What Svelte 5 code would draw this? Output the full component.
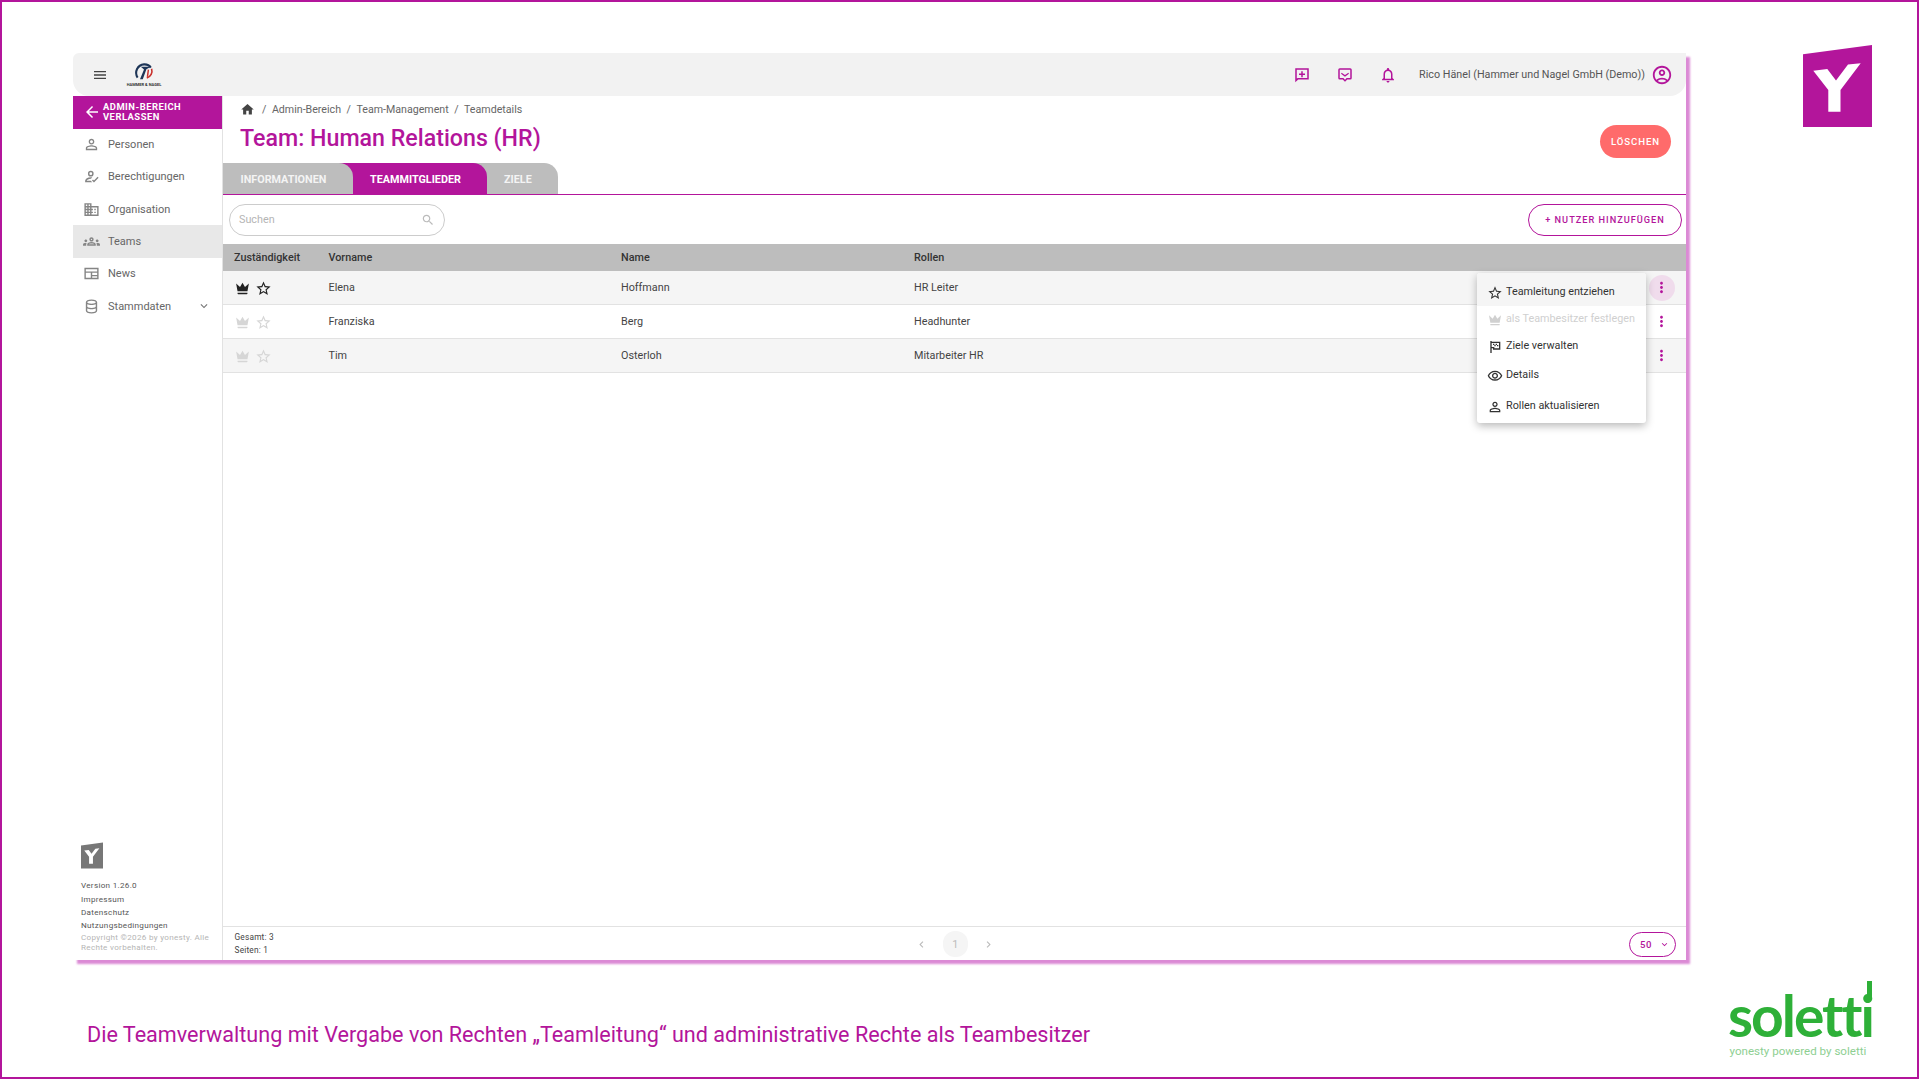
<script>
  const P = {
    menu: 'M3 18h18v-2H3v2zm0-5h18v-2H3v2zm0-7v2h18V6H3z',
    home: 'M10 20v-6h4v6h5v-8h3L12 3 2 12h3v8z',
    back: 'M20 11H7.83l5.59-5.59L12 4l-8 8 8 8 1.41-1.41L7.83 13H20v-2z',
    person: 'M12 5.9c1.16 0 2.1.94 2.1 2.1s-.94 2.1-2.1 2.1S9.9 9.16 9.9 8s.94-2.1 2.1-2.1m0 9c2.97 0 6.1 1.46 6.1 2.1v1.1H5.9V17c0-.64 3.13-2.1 6.1-2.1M12 4C9.79 4 8 5.79 8 8s1.79 4 4 4 4-1.79 4-4-1.79-4-4-4zm0 9c-2.67 0-8 1.34-8 4v3h16v-3c0-2.66-5.33-4-8-4z',
    reg: 'M11 4a4 4 0 1 0 0 8 4 4 0 0 0 0-8zm0 2a2 2 0 1 1 0 4 2 2 0 0 1 0-4zM3 18c.2-2.6 3.4-5 8-5 .7 0 1.4.1 2 .2l-1.7 1.8H11c-3.1 0-5.4 1.4-5.8 3H11l2 2H3v-2zm12.5 2.5L12.7 17.7l1.4-1.4 1.4 1.4 5.1-5.2 1.4 1.4z',
    domain: 'M12 7V3H2v18h20V7H12zM6 19H4v-2h2v2zm0-4H4v-2h2v2zm0-4H4V9h2v2zm0-4H4V5h2v2zm4 12H8v-2h2v2zm0-4H8v-2h2v2zm0-4H8V9h2v2zm0-4H8V5h2v2zm10 12h-8v-2h2v-2h-2v-2h2v-2h-2V9h8v10zm-2-8h-2v2h2v-2zm0 4h-2v2h2v-2z',
    groups: 'M4 13c1.1 0 2-.9 2-2s-.9-2-2-2-2 .9-2 2 .9 2 2 2zm1.13 1.1c-.37-.06-.74-.1-1.13-.1-.99 0-1.93.21-2.78.58C.48 14.9 0 15.62 0 16.43V18h4.5v-1.61c0-.83.23-1.61.63-2.29zM20 13c1.1 0 2-.9 2-2s-.9-2-2-2-2 .9-2 2 .9 2 2 2zm4 3.43c0-.81-.48-1.53-1.22-1.85-.85-.37-1.79-.58-2.78-.58-.39 0-.76.04-1.13.1.4.68.63 1.46.63 2.29V18H24v-1.57zm-7.76-2.78c-1.17-.52-2.61-.9-4.24-.9-1.63 0-3.07.39-4.24.9C6.68 14.13 6 15.21 6 16.39V18h12v-1.61c0-1.18-.68-2.26-1.76-2.74zM8.07 16c.09-.23.13-.39.91-.69.97-.38 1.99-.56 3.02-.56s2.05.18 3.02.56c.77.3.81.46.91.69H8.07zM12 8c.55 0 1 .45 1 1s-.45 1-1 1-1-.45-1-1 .45-1 1-1m0-2c-1.66 0-3 1.34-3 3s1.34 3 3 3 3-1.34 3-3-1.34-3-3-3z',
    news: 'M2 4h20v16H2V4zm2 2v3h16V6H4zm0 5v7h7v-7H4zm9 0v3h7v-3h-7zm0 5v2h7v-2h-7z',
    storage: 'M12 2C7 2 4 3.800 4 6v12c0 2.200 3 4 8 4s8-1.800 8-4V6c0-2.200-3-4-8-4zm0 2c3.900 0 6 1.300 6 2s-2.100 2-6 2-6-1.300-6-2 2.100-2 6-2zM6 8.900C7.400 9.600 9.500 10 12 10s4.600-.4 6-1.100V12c0 .7-2.100 2-6 2s-6-1.300-6-2V8.900zm0 6C7.400 15.600 9.500 16 12 16s4.600-.4 6-1.100V18c0 .7-2.100 2-6 2s-6-1.300-6-2v-3.100z',
    down: 'M7.41 8.59L12 13.17l4.59-4.58L18 10l-6 6-6-6z',
    left: 'M15.41 7.41L14 6l-6 6 6 6 1.41-1.41L10.830 12z',
    right: 'M8.59 16.59L10 18l6-6-6-6-1.41 1.410L13.170 12z',
    star: 'M22 9.24l-7.19-.62L12 2 9.19 8.630 2 9.240l5.460 4.730L5.820 21 12 17.270 18.180 21l-1.630-7.030L22 9.240zM12 15.400l-3.760 2.270 1-4.280-3.320-2.880 4.380-.38L12 6.100l1.710 4.040 4.380.38-3.320 2.880 1 4.280L12 15.400z',
    crown: 'M5 16L3 5l5.500 5L12 4l3.500 6L21 5l-2 11H5zm14 3c0 .6-.4 1-1 1H6c-.6 0-1-.4-1-1v-1h14v1z',
    kebab: 'M12 8c1.100 0 2-.9 2-2s-.9-2-2-2-2 .9-2 2 .9 2 2 2zm0 2c-1.100 0-2 .9-2 2s.9 2 2 2 2-.9 2-2-.9-2-2-2zm0 6c-1.100 0-2 .9-2 2s.9 2 2 2 2-.9 2-2-.9-2-2-2z',
    eye: 'M12 6c3.790 0 7.170 2.130 8.820 5.500C19.170 14.870 15.790 17 12 17s-7.170-2.130-8.820-5.500C4.830 8.130 8.210 6 12 6m0-2C7 4 2.730 7.110 1 11.500 2.730 15.890 7 19 12 19s9.270-3.110 11-7.500C21.270 7.110 17 4 12 4zm0 5c1.380 0 2.500 1.120 2.500 2.500S13.380 14 12 14s-2.500-1.120-2.500-2.500S10.620 9 12 9m0-2c-2.480 0-4.500 2.020-4.500 4.500S9.520 16 12 16s4.500-2.020 4.500-4.500S14.480 7 12 7z',
    flag: 'M5 3h2v1h13v12H9v-2H7v7H5V3zm2 3v6h4v2h7V6H7zm2 1h2v2H9V7zm2 2h2v2h-2V9zm2-2h2v2h-2V7zm2 2h2v2h-2V9z',
    bell: 'M12 22c1.100 0 2-.9 2-2h-4c0 1.100.9 2 2 2zm6-6v-5c0-3.070-1.630-5.640-4.500-6.320V4c0-.83-.67-1.500-1.500-1.500s-1.500.67-1.500 1.500v.68C7.640 5.360 6 7.920 6 11v5l-2 2v1h16v-1l-2-2zm-2 1H8v-6c0-2.480 1.510-4.500 4-4.500s4 2.020 4 4.500v6z',
    account: 'M12 2C6.480 2 2 6.480 2 12s4.480 10 10 10 10-4.480 10-10S17.520 2 12 2zM7.350 18.500C8.660 17.560 10.260 17 12 17s3.340.56 4.650 1.500c-1.310.94-2.910 1.500-4.650 1.500s-3.340-.56-4.650-1.500zm10.790-1.380C16.450 15.800 14.320 15 12 15s-4.450.8-6.140 2.120C4.700 15.730 4 13.950 4 12c0-4.420 3.580-8 8-8s8 3.580 8 8c0 1.950-.7 3.730-1.860 5.120zM12 6c-1.930 0-3.500 1.570-3.500 3.500S10.070 13 12 13s3.500-1.570 3.500-3.500S13.930 6 12 6zm0 5c-.83 0-1.500-.67-1.500-1.500S11.170 8 12 8s1.500.67 1.500 1.500S12.830 11 12 11z',
    search: 'M15.500 14h-.79l-.28-.27C15.410 12.590 16 11.110 16 9.500 16 5.910 13.090 3 9.500 3S3 5.910 3 9.500 5.910 16 9.500 16c1.610 0 3.090-.59 4.230-1.570l.27.28v.79l5 4.990L20.490 19l-4.990-5zm-6 0C7.010 14 5 11.990 5 9.500S7.010 5 9.500 5 14 7.010 14 9.500 11.990 14 9.500 14z',
    msgplus: 'M3 3h18v15H7l-4 3.500V3zm2 2v11.500L6.300 16H19V5H5zm6 2h2v3h3v2h-3v3h-2v-3H8v-2h3V7z',
    msgdown: 'M5 3h14a2 2 0 0 1 2 2v11a2 2 0 0 1-2 2h-4l-3 3-3-3H5a2 2 0 0 1-2-2V5a2 2 0 0 1 2-2zm0 2v11h4.800L12 18.200l2.200-2.200H19V5H5zm2.500 4L12 12l4.500-3 .8 1.400L12 14.200l-5.300-3.800z'
  };

  const nav = [
    { label: 'Personen', icon: 'person' },
    { label: 'Berechtigungen', icon: 'reg' },
    { label: 'Organisation', icon: 'domain' },
    { label: 'Teams', icon: 'groups', active: true },
    { label: 'News', icon: 'news' },
    { label: 'Stammdaten', icon: 'storage', more: true }
  ];
  const rows = [
    { first: 'Elena', last: 'Hoffmann', role: 'HR Leiter', lead: true, open: true },
    { first: 'Franziska', last: 'Berg', role: 'Headhunter' },
    { first: 'Tim', last: 'Osterloh', role: 'Mitarbeiter HR' }
  ];
  const items = [
    { label: 'Teamleitung entziehen', icon: 'star', cls: 'first' },
    { label: 'als Teambesitzer festlegen', icon: 'crown', cls: 'second off' },
    { label: 'Ziele verwalten', icon: 'flag', cls: 'compact' },
    { label: 'Details', icon: 'eye', cls: '' },
    { label: 'Rollen aktualisieren', icon: 'person', cls: 'last' }
  ];
</script>

{#snippet ic(name, cls)}
  <svg class="ic {cls}" viewBox="0 0 24 24" aria-hidden="true"><path d={P[name]} fill="currentColor" fill-rule="evenodd" /></svg>
{/snippet}

{#snippet ylogo(cls)}
  <svg class={cls} viewBox="0 0 69 82" aria-hidden="true">
    <polygon points="0,9.300 69,0 69,82 0,82" fill="currentColor" />
    <polygon points="10.300,25.700 24.300,24 33,35.500 45,19.500 57.700,18.300 37.500,45 37.500,66.700 25.300,66.700 25.300,45" fill="#fff" />
  </svg>
{/snippet}

<div class="slide">
  <div class="upper">
    <div class="app">
      <header class="topbar">
        <div class="top-left">
          {@render ic('menu', 'burger')}
          <div class="hn">
            <svg viewBox="0 0 30 24" class="hn-mark" aria-hidden="true">
              <path d="M7 19C2.500 12 7 3 15 2.500c4-.2 7 1.500 8.500 4" fill="none" stroke="#1d3557" stroke-width="2.600" />
              <path d="M24.500 8c1.500 5-1 10-6 11.500" fill="none" stroke="#c9302c" stroke-width="2" />
              <path d="M11 5.500h12.500l-5.500 3L13.500 21h-3.500l5-12z" fill="#1d3557" />
              <path d="M20.500 9l-1.200 9" stroke="#c9302c" stroke-width="1.800" />
            </svg>
            <span class="hn-name">HAMMER &amp; NAGEL</span>
          </div>
        </div>
        <div class="top-right">
          {@render ic('msgplus', 'tool')}
          {@render ic('msgdown', 'tool')}
          {@render ic('bell', 'tool')}
          <span class="user">Rico Hänel (Hammer und Nagel GmbH (Demo))</span>
          {@render ic('account', 'acct')}
        </div>
      </header>

      <div class="body">
        <aside class="side">
          <button class="leave">
            {@render ic('back', 'leave-ic')}
            <span>ADMIN-BEREICH<br />VERLASSEN</span>
          </button>
          <nav class="nav">
            {#each nav as n}
              <div class="nav-item" class:active={n.active}>
                {@render ic(n.icon, 'nav-ic')}
                <span class="nav-label">{n.label}</span>
                {#if n.more}{@render ic('down', 'nav-more')}{/if}
              </div>
            {/each}
          </nav>
          <div class="side-foot">
            {@render ylogo('y-small')}
            <div class="foot-links">
              <div>Version 1.26.0</div>
              <div>Impressum</div>
              <div>Datenschutz</div>
              <div>Nutzungsbedingungen</div>
            </div>
            <div class="copy">Copyright ©2026 by yonesty. Alle Rechte vorbehalten.</div>
          </div>
        </aside>

        <main class="main">
          <div class="head">
            <div>
              <div class="crumbs">
                {@render ic('home', 'home')}
                <span>/</span><span>Admin-Bereich</span>
                <span>/</span><span>Team-Management</span>
                <span>/</span><span>Teamdetails</span>
              </div>
              <h1>Team: Human Relations (HR)</h1>
            </div>
            <button class="del">LÖSCHEN</button>
          </div>

          <div class="tabs">
            <div class="tab t1">INFORMATIONEN</div>
            <div class="tab t2">TEAMMITGLIEDER</div>
            <div class="tab t3">ZIELE</div>
          </div>

          <div class="tools">
            <div class="search"><span>Suchen</span>{@render ic('search', 'search-ic')}</div>
            <button class="add">+ NUTZER HINZUFÜGEN</button>
          </div>

          <div class="thead grid">
            <div>Zuständigkeit</div><div>Vorname</div><div>Name</div><div>Rollen</div>
          </div>
          <div class="tbody">
            {#each rows as r, i}
              <div class="row grid" class:odd={i !== 1}>
                <div class="marks" class:on={r.lead}>
                  {@render ic('crown', 'mark')}
                  {@render ic('star', 'mark')}
                </div>
                <div>{r.first}</div><div>{r.last}</div><div>{r.role}</div>
                <div class="kebab" class:open={r.open}>{@render ic('kebab', 'kebab-ic')}</div>
              </div>
            {/each}
          </div>

          <footer class="pager">
            <div class="totals"><div>Gesamt: 3</div><div>Seiten: 1</div></div>
            <div class="pages">
              {@render ic('left', 'chev')}
              <span class="page">1</span>
              {@render ic('right', 'chev')}
            </div>
            <div class="size"><span>50</span>{@render ic('down', 'size-ic')}</div>
          </footer>
        </main>
      </div>

      <div class="ctx">
        {#each items as it}
          <div class="ctx-item {it.cls}">
            {@render ic(it.icon, 'ctx-ic')}
            <span>{it.label}</span>
          </div>
        {/each}
      </div>
    </div>

    {@render ylogo('y-big')}
  </div>

  <div class="lower">
    <p class="caption">Die Teamverwaltung mit Vergabe von Rechten „Teamleitung“ und administrative Rechte als Teambesitzer</p>
    <div class="brand">
      <div class="word">soletti<i class="bar"></i></div>
      <div class="tag">yonesty powered by soletti</div>
    </div>
  </div>
</div>

<style>
  :global(body) { margin: 0; background: #fff; }
  .slide {
    width: 1919px; height: 1079px; box-sizing: border-box;
    border: 2px solid #b3159b;
    font-family: Roboto, "Liberation Sans", sans-serif;
    color: #444; overflow: hidden; background: #fff;
  }
  .ic { display: block; flex: none; }
  .upper { display: flex; align-items: flex-start; padding: 43px 0 0 71px; }
  .y-big { width: 69px; height: 82px; margin-left: 117px; color: #b3159b; }

  .app {
    position: relative; width: 1613px; height: 907px; margin-top: 8px;
    display: flex; flex-direction: column; background: #fff;
    box-shadow: 4px 4px 2px #db8ad5; font-size: 10.800px;
  }
  .topbar {
    height: 43px; flex: none; background: #f2f2f2;
    border-radius: 6px 0 16px 16px;
    display: flex; justify-content: space-between; align-items: center;
    padding: 0 13px 0 19px;
  }
  .top-left { display: flex; align-items: center; }
  .burger { width: 16px; height: 16px; color: #444; }
  .hn { margin-left: 19px; width: 34px; display: flex; flex-direction: column; align-items: center; }
  .hn-mark { width: 24px; height: 20px; display: block; }
  .hn-name { font-size: 4px; font-weight: 700; color: #333; white-space: nowrap; line-height: 6px; }
  .top-right { display: flex; align-items: center; color: #b3159b; }
  .tool { width: 18px; height: 18px; margin-right: 25px; }
  .tool:nth-child(3) { margin-right: 22px; }
  .user { color: #555; font-size: 10.750px; }
  .acct { width: 22px; height: 22px; margin-left: 6px; }

  .body { flex: 1; display: flex; min-height: 0; }
  .side {
    width: 150px; flex: none; box-sizing: border-box;
    border-right: 1.500px solid #e2e2e2;
    display: flex; flex-direction: column;
  }
  .leave {
    height: 32.500px; flex: none; border: 0; background: #b3159b; color: #fff;
    display: flex; align-items: center; gap: 2px; padding: 0 0 0 10px;
    font: 700 9.400px/10.700px Roboto, sans-serif; letter-spacing: .5px; text-align: left;
  }
  .leave-ic { width: 18px; height: 18px; }
  .nav { display: flex; flex-direction: column; flex: 1; }
  .nav-item { height: 32.300px; display: flex; align-items: center; padding: 0 11px 0 10px; color: #666; }
  .nav-item.active { background: #e8e8e8; }
  .nav-ic { width: 17px; height: 17px; margin-right: 8px; color: #858585; }
  .nav-label { font-size: 11px; flex: 1; }
  .nav-more { width: 14px; height: 14px; color: #777; }
  .side-foot { padding: 0 8px 7.600px; font-size: 8.100px; letter-spacing: .3px; }
  .y-small { width: 22px; height: 27px; color: #777; display: block; margin-bottom: 10px; }
  .foot-links { line-height: 13.300px; color: #555; }
  .copy { color: #b5b5b5; line-height: 10px; }

  .main { flex: 1; min-width: 0; display: flex; flex-direction: column; }
  .head { height: 67px; flex: none; display: flex; justify-content: space-between; box-sizing: border-box; padding: 0 15px 0 17px; }
  .crumbs { display: flex; align-items: center; gap: 5.500px; height: 27.500px; color: #666; font-size: 10.650px; }
  .home { width: 15px; height: 15px; color: #444; margin-right: 1.500px; }
  h1 { margin: 0; font-size: 23.200px; line-height: 29px; font-weight: 500; color: #b3159b; }
  .del {
    margin-top: 29px; width: 71px; height: 33px; border: 0; border-radius: 17px;
    background: #ff6b6b; color: #fff; font: 500 9.600px Roboto, sans-serif; letter-spacing: .9px; padding: 0;
  }
  .tabs { display: flex; height: 32px; flex: none; border-bottom: 1.500px solid #b3159b; box-sizing: border-box; }
  .tab {
    position: relative; display: flex; align-items: center; background: #bdbdbd; color: #f4f4f4;
    font-weight: 700; font-size: 10.800px; border-radius: 0 14px 0 0; height: 31px; padding-top: 1.500px;
  }
  .t1 { z-index: 3; width: 130px; padding-left: 17.500px; box-sizing: border-box; }
  .t2 { z-index: 2; width: 148px; margin-left: -14px; padding-left: 31px; box-sizing: border-box; background: #b3159b; color: #fff; }
  .t3 { z-index: 1; width: 85px; margin-left: -14px; padding-left: 31px; box-sizing: border-box; }

  .tools { height: 49px; flex: none; display: flex; justify-content: space-between; align-items: center; padding: 0 4px 0 6px; box-sizing: border-box; }
  .search {
    width: 216px; height: 32px; box-sizing: border-box; border: 1px solid #ccc; border-radius: 16px;
    display: flex; justify-content: space-between; align-items: center; padding: 0 9px; color: #b5b5b5;
  }
  .search-ic { width: 14px; height: 14px; color: #bbb; }
  .add {
    width: 154px; height: 32px; background: #fff; border: 1px solid #b3159b; border-radius: 16px; color: #b3159b;
    font: 500 9.200px Roboto, sans-serif; letter-spacing: 1px; padding: 0;
  }
  .grid { display: grid; align-items: center; padding-left: 11px; }
  .thead { height: 27px; flex: none; background: #bdbdbd; color: #333; font-weight: 500; box-sizing: border-box; }
  .thead.grid { grid-template-columns: 94.500px 292.500px 293px 1fr; }
  .row.grid { grid-template-columns: 94.500px 292.500px 293px 1fr 52px; height: 34px; box-sizing: border-box; border-bottom: 1.500px solid #e2e2e2; color: #444; }
  .row.odd { background: #f5f5f5; }
  .tbody { flex: 1; }
  .marks { display: flex; gap: 4px; color: #d6d6d6; margin-top: 1px; }
  .marks.on { color: #222; }
  .mark { width: 17px; height: 17px; }
  .kebab { width: 26px; height: 26px; border-radius: 50%; display: flex; align-items: center; justify-content: center; color: #b3159b; justify-self: start; margin-left: 14.500px; }
  .kebab.open { background: #f0dcec; }
  .kebab-ic { width: 17px; height: 17px; }

  .pager {
    height: 34px; flex: none; border-top: 1.500px solid #e2e2e2; box-sizing: border-box;
    display: grid; grid-template-columns: 1fr auto 1fr; align-items: center; padding: 1px 10px 0 11.500px;
  }
  .totals { font-size: 8.300px; line-height: 13.400px; color: #444; letter-spacing: .2px; }
  .pages { display: flex; align-items: center; gap: 14.500px; color: #bbb; }
  .chev { width: 13px; height: 13px; }
  .page { width: 25px; height: 26px; border-radius: 12px; background: #f5f5f5; display: flex; align-items: center; justify-content: center; }
  .size {
    justify-self: end;
    width: 47px; height: 25px; box-sizing: border-box; border: 1px solid #b3159b; border-radius: 13px; color: #b3159b;
    display: flex; align-items: center; justify-content: space-between; padding: 0 5px 0 10px; font-size: 9.600px; font-weight: 500; letter-spacing: .5px;
  }
  .size-ic { width: 11px; height: 11px; }

  .ctx {
    position: absolute; top: 220px; right: 40px; width: 169px; height: 150px; background: #fff; border-radius: 3px;
    box-shadow: 0 3px 8px rgba(0,0,0,.28); color: #333;
  }
  .ctx-item { height: 30px; display: flex; align-items: center; padding-left: 10px; gap: 3px; font-size: 10.800px; }
  .ctx-item.first { height: 33px; background: #f5f5f5; padding-top: 3px; box-sizing: border-box; border-radius: 3px 3px 0 0; }
  .ctx-item.second { height: 26px; padding-bottom: 1.500px; box-sizing: border-box; }
  .ctx-item.compact { height: 27px; }
  .ctx-item.last { height: 31px; padding-top: 1px; box-sizing: border-box; }
  .ctx-item.off { color: #d0d0d0; }
  .ctx-ic { width: 16px; height: 16px; margin-top: 3px; }

  .lower { display: flex; justify-content: space-between; align-items: flex-start; padding: 18px 45px 0 85px; }
  .caption { margin: 42.500px 0 0; font-size: 21.600px; color: #b3159b; line-height: 28px; }
  .brand { display: flex; flex-direction: column; width: 144px; margin-top: 7px; }
  .word { position: relative; font: 700 57px/60px Lato, sans-serif; color: #2eb038; letter-spacing: -2px; white-space: nowrap; }
  .bar { position: absolute; right: 0; top: -4px; width: 5px; height: 19px; background: #2eb038; }
  .tag { font-size: 11.600px; color: #8ecf92; white-space: nowrap; padding-left: 1.500px; margin-top: -1px; }
</style>
